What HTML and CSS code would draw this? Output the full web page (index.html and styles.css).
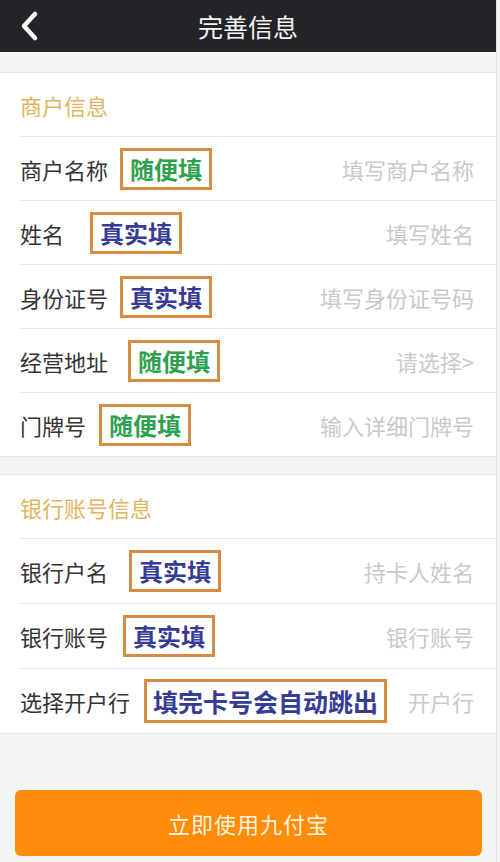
FILE: index.html
```html
<!DOCTYPE html>
<html lang="zh">
<head>
<meta charset="utf-8">
<title>完善信息</title>
<link rel="stylesheet" href="styles.css">
</head>
<body>
<div class="page">
  <header class="topbar">
    <svg class="back" viewBox="0 0 24 32" width="24" height="32"><path d="M17 4 L6 16 L17 28" fill="none" stroke="#fff" stroke-width="4.5" stroke-linecap="round" stroke-linejoin="round"/></svg>
    <h1 class="title">完善信息</h1>
  </header>

  <section class="group g1">
    <div class="group-title">商户信息</div>
    <div class="row">
      <span class="label">商户名称</span>
      <span class="tag green m12">随便填</span>
      <span class="ph">填写商户名称</span>
    </div>
    <div class="row">
      <span class="label">姓名</span>
      <span class="tag blue m26">真实填</span>
      <span class="ph">填写姓名</span>
    </div>
    <div class="row">
      <span class="label">身份证号</span>
      <span class="tag blue m12">真实填</span>
      <span class="ph">填写身份证号码</span>
    </div>
    <div class="row">
      <span class="label">经营地址</span>
      <span class="tag green m20">随便填</span>
      <span class="ph">请选择&gt;</span>
    </div>
    <div class="row">
      <span class="label">门牌号</span>
      <span class="tag green m13">随便填</span>
      <span class="ph">输入详细门牌号</span>
    </div>
  </section>

  <section class="group g2">
    <div class="group-title">银行账号信息</div>
    <div class="row">
      <span class="label">银行户名</span>
      <span class="tag blue m21">真实填</span>
      <span class="ph">持卡人姓名</span>
    </div>
    <div class="row">
      <span class="label">银行账号</span>
      <span class="tag blue m15">真实填</span>
      <span class="ph">银行账号</span>
    </div>
    <div class="row">
      <span class="label">选择开户行</span>
      <span class="tag blue wide m14">填完卡号会自动跳出</span>
      <span class="ph">开户行</span>
    </div>
  </section>

  <div class="footer">
    <button class="submit">立即使用九付宝</button>
  </div>
</div>
</body>
</html>
```

FILE: styles.css
```css
* { box-sizing: border-box; }
html, body {
  margin: 0;
  padding: 0;
  background: #f3f5f6;
  font-family: "Noto Sans CJK SC", "Noto Sans", sans-serif;
}
.page {
  width: 497px;
  min-height: 862px;
  background: #f3f5f6;
  border-right: 1px solid #dfe1e3;
}
.topbar {
  height: 52px;
  background: #232427;
  display: flex;
  align-items: center;
  justify-content: center;
  position: relative;
}
.back {
  position: absolute;
  left: 18px;
  top: 10px;
}
.title {
  margin: 0;
  color: #f4f4f4;
  font-size: 25px;
  font-weight: 400;
  line-height: 1;
}
.group {
  background: #fff;
  border-top: 1px solid #e2e4e6;
  border-bottom: 1px solid #e2e4e6;
  padding-left: 20px;
}
.g1 { margin-top: 20px; }
.g2 { margin-top: 17px; }
.group-title {
  height: 63px;
  display: flex;
  align-items: center;
  color: #e2b460;
  font-size: 22px;
}
.row {
  height: 64px;
  border-top: 1px solid #e6e7e8;
  display: flex;
  align-items: center;
  padding-right: 22px;
}
.g2 .row { height: 65px; }
.label {
  color: #333;
  font-size: 22px;
  white-space: nowrap;
}
.ph {
  margin-left: auto;
  color: #c9c9c9;
  font-size: 22px;
  white-space: nowrap;
}
.tag {
  border: 3px solid #d78b43;
  padding: 4px 7px;
  font-size: 24px;
  font-weight: 700;
  line-height: 28px;
  white-space: nowrap;
  background: #fff;
}
.tag.green { color: #2ea14f; }
.tag.blue { color: #363c96; }
.tag.wide { font-size: 25px; padding: 5px 6px; }
.m12 { margin-left: 12px; }
.m13 { margin-left: 13px; }
.m14 { margin-left: 14px; }
.m15 { margin-left: 15px; }
.m20 { margin-left: 20px; }
.m21 { margin-left: 21px; }
.m26 { margin-left: 26px; }
.footer {
  padding: 56px 15px 0 15px;
}
.submit {
  display: block;
  width: 467px;
  height: 66px;
  border: none;
  border-radius: 6px;
  background: #ff8c0b;
  color: #fff2dc;
  font-family: "Noto Sans CJK SC", "Noto Sans", sans-serif;
  font-size: 22px;
  letter-spacing: 1px;
}
```
